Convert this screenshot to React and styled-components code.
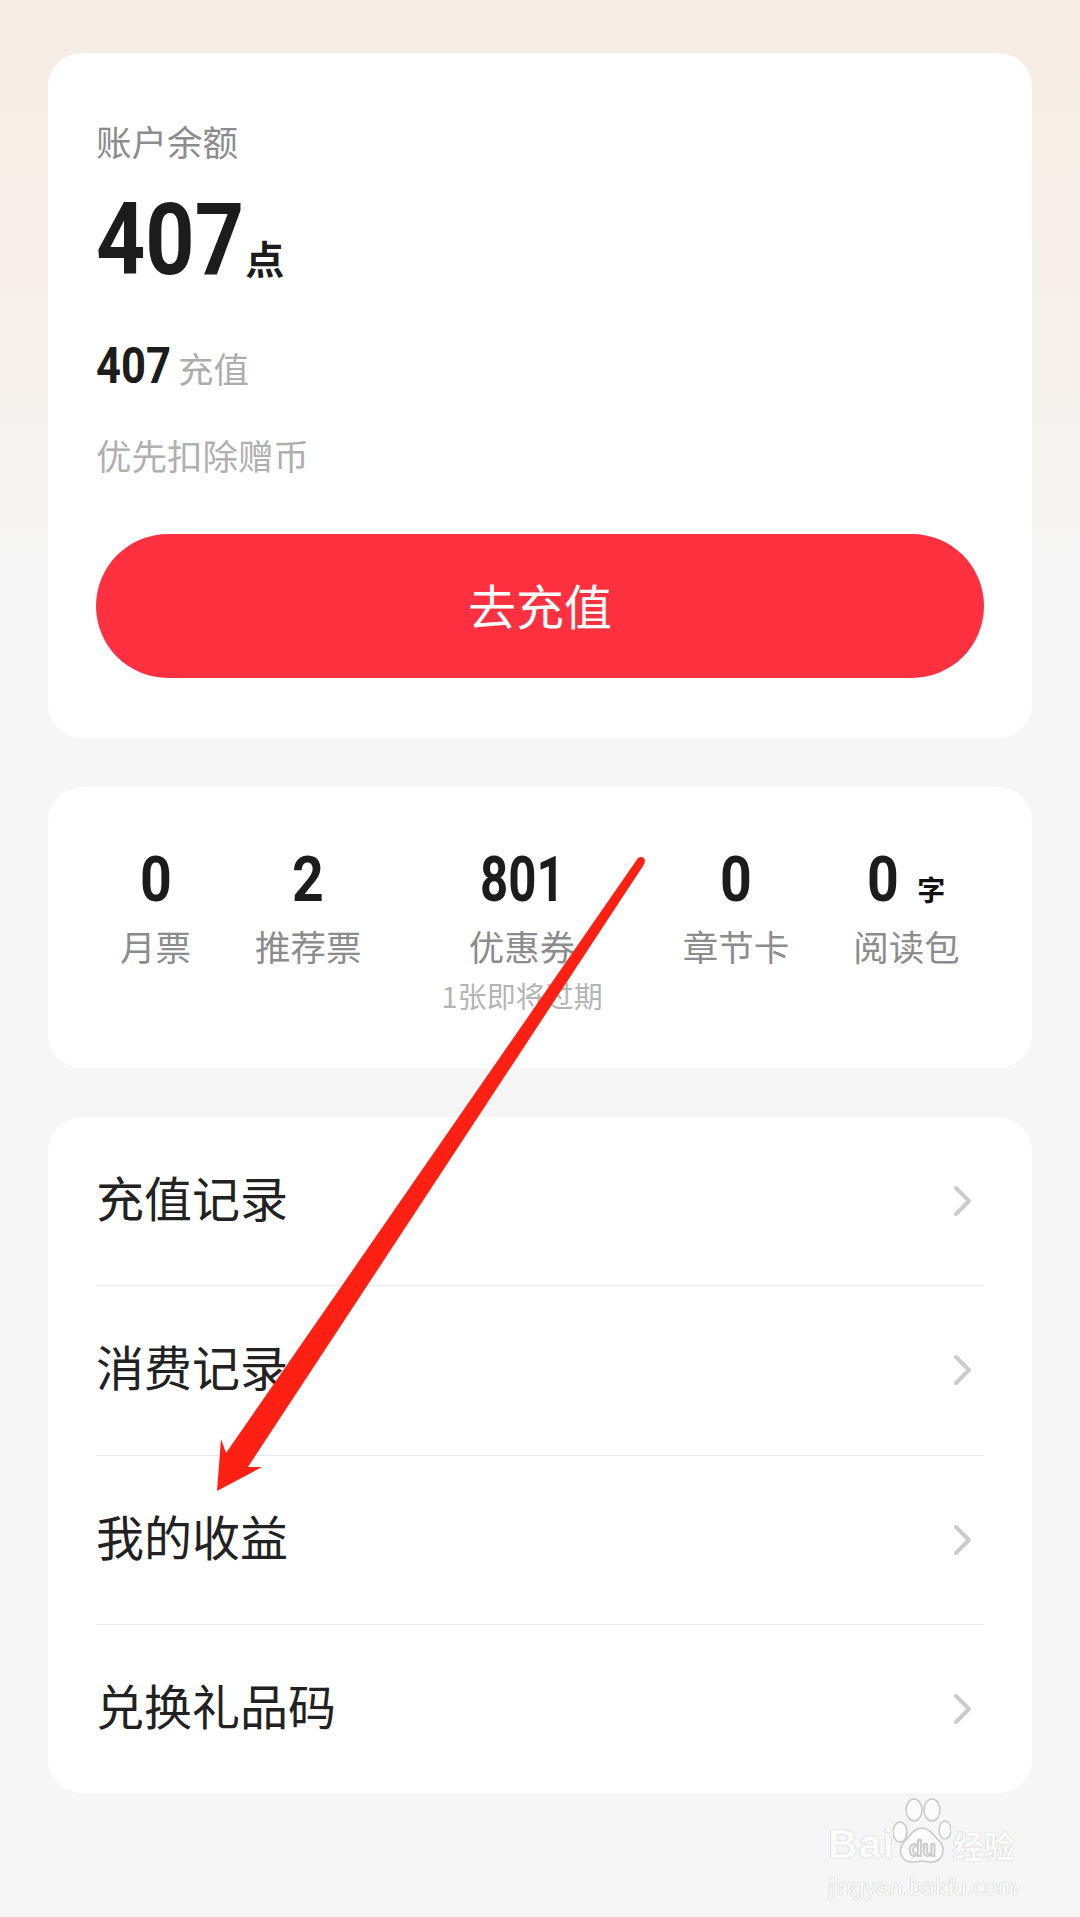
import React from 'react'
import styled, { createGlobalStyle } from 'styled-components'

const CJK = `"Noto Sans CJK SC", "Noto Sans", sans-serif`
const NUM = `Roboto, "Liberation Sans", "Noto Sans CJK SC", sans-serif`

const GlobalStyle = createGlobalStyle`
  html, body { margin: 0; padding: 0; }
  body { font-family: ${CJK}; background: #f6f6f6; }
`

const Page = styled.div`
  position: relative;
  width: 1080px;
  height: 1917px;
  box-sizing: border-box;
  padding: 53px 48px 0;
  display: flex;
  flex-direction: column;
  gap: 49px;
  overflow: hidden;
  background: linear-gradient(180deg, #f6ece3 0, #f7efe7 200px, #f6f2ee 400px, #f6f6f6 560px);
`

const Card = styled.section`
  background: #fff;
  border-radius: 34px;
`

const BalanceCard = styled(Card)`
  height: 685px;
  box-sizing: border-box;
  padding: 0 48px;
  display: flex;
  flex-direction: column;
`

const Caption = styled.div`
  font-size: 35.5px;
  line-height: 50px;
  color: ${p => p.$color};
  margin-top: ${p => p.$top}px;
`

// the reference numerals are a condensed DIN, so Roboto gets squeezed
// the negative margin gives back the width the transform takes away
const Digits = styled.span`
  display: inline-block;
  font-family: ${NUM};
  font-weight: 700;
  font-size: ${p => p.$size}px;
  line-height: ${p => p.$size}px;
  color: #1c1c1c;
  transform: scaleX(${p => p.$squeeze});
  transform-origin: left center;
  margin-right: ${p => -0.57 * p.$count * (1 - p.$squeeze)}em;
`

const Balance = styled.div`
  display: flex;
  align-items: baseline;
  height: 100px;
  margin-top: 24px;
`

const Unit = styled.span`
  font-family: ${CJK};
  font-weight: 700;
  font-size: 39px;
  line-height: 39px;
  margin-left: 1px;
  color: #1c1c1c;
`

const Split = styled.div`
  display: flex;
  align-items: baseline;
  gap: 7px;
  margin-top: 51px;
  height: 50px;
`

const SplitLabel = styled.span`
  font-size: 35.5px;
  line-height: 50px;
  color: #adadad;
`

const RechargeButton = styled.button`
  margin-top: 54px;
  height: 144px;
  padding: 0 0 5px;
  border: 0;
  border-radius: 72px;
  background: #ff3040;
  color: #fff;
  font-family: ${CJK};
  font-size: 48px;
`

const StatsCard = styled(Card)`
  height: 281px;
  box-sizing: border-box;
  padding: 61px 0 0 72px;
  display: flex;
  align-items: flex-start;
  gap: 64px;
`

const Stat = styled.div`
  display: flex;
  flex-direction: column;
  align-items: center;
  margin: ${p => (p.$wide ? '0 16px' : '0')};
`

const StatValue = styled.div`
  display: flex;
  align-items: baseline;
  gap: 18px;
  height: 62px;
`

const StatUnit = styled.span`
  font-family: ${CJK};
  font-weight: 700;
  font-size: 28px;
  line-height: 28px;
  color: #111;
`

const StatLabel = styled.div`
  margin-top: 11px;
  font-size: 35.5px;
  line-height: 50px;
  color: #8c8c8c;
`

const StatNote = styled.div`
  margin-top: 2px;
  font-size: 29px;
  line-height: 44px;
  color: #b5b5b5;
  white-space: nowrap;
`

const MenuCard = styled(Card)`
  height: 676px;
  box-sizing: border-box;
  padding: 0 48px;
  display: flex;
  flex-direction: column;
`

const MenuRow = styled.div`
  flex: 1;
  display: flex;
  align-items: center;
  justify-content: space-between;
  padding-right: 11px;
  border-top: ${p => (p.$first ? '0' : '1px solid #e9e9e9')};
`

const MenuLabel = styled.span`
  font-size: 48px;
  line-height: 60px;
  color: #222;
  margin-bottom: 10px;
`

const Pointer = styled.svg`
  position: absolute;
  left: 0;
  top: 0;
  pointer-events: none;
`

const Watermark = styled.div`
  position: absolute;
  left: 828px;
  top: 1796px;
  width: 196px;
  color: #fbfbfb;
  text-shadow: 0 0 1px #c4c4c4, 0 0 1px #c4c4c4;
`

const MarkTop = styled.div`
  display: flex;
  align-items: flex-end;
  height: 70px;
`

const MarkBrand = styled.span`
  font-family: "Liberation Sans", sans-serif;
  font-weight: 700;
  font-size: 41px;
  line-height: 44px;
  letter-spacing: 1px;
`

const MarkPaw = styled.svg`
  margin: 0 2px 0 -2px;
  flex: none;
`

const MarkPawText = styled.text`
  font-family: "Liberation Sans", sans-serif;
  font-size: 22px;
  font-weight: 700;
  fill: #fbfbfb;
  stroke: #c9c9c9;
  stroke-width: 0.8;
`

const MarkCn = styled.span`
  font-size: 31px;
  line-height: 42px;
  font-weight: 700;
  white-space: nowrap;
`

const MarkUrl = styled.div`
  font-family: "Liberation Sans", sans-serif;
  font-size: 23.5px;
  line-height: 30px;
  margin-top: 6px;
  white-space: nowrap;
`

const stats = [
  { value: '0', label: '月票' },
  { value: '2', label: '推荐票' },
  { value: '801', label: '优惠券', note: '1张即将过期' },
  { value: '0', label: '章节卡' },
  { value: '0', unit: '字', label: '阅读包' },
]

const menu = ['充值记录', '消费记录', '我的收益', '兑换礼品码']

const Chevron = () => (
  <svg width="20" height="32" viewBox="0 0 20 32" fill="none">
    <path d="M3 3l13 13L3 29" stroke="#cbcbcb" strokeWidth="4" strokeLinecap="round" strokeLinejoin="round" />
  </svg>
)

export default function App() {
  return (
    <Page>
      <GlobalStyle />
      <BalanceCard>
        <Caption $color="#8c8c8c" $top={63}>账户余额</Caption>
        <Balance>
          <Digits $size={100} $squeeze={0.86} $count={3}>407</Digits>
          <Unit>点</Unit>
        </Balance>
        <Split>
          <Digits $size={50} $squeeze={0.87} $count={3}>407</Digits>
          <SplitLabel>充值</SplitLabel>
        </Split>
        <Caption $color="#b0b0b0" $top={39}>优先扣除赠币</Caption>
        <RechargeButton>去充值</RechargeButton>
      </BalanceCard>

      <StatsCard>
        {stats.map(s => (
          <Stat key={s.label} $wide={!!s.note}>
            <StatValue>
              <Digits $size={63} $squeeze={s.value.length > 1 ? 0.78 : 0.88} $count={s.value.length}>{s.value}</Digits>
              {s.unit && <StatUnit>{s.unit}</StatUnit>}
            </StatValue>
            <StatLabel>{s.label}</StatLabel>
            {s.note && <StatNote>{s.note}</StatNote>}
          </Stat>
        ))}
      </StatsCard>

      <MenuCard>
        {menu.map((m, i) => (
          <MenuRow key={m} $first={i === 0}>
            <MenuLabel>{m}</MenuLabel>
            <Chevron />
          </MenuRow>
        ))}
      </MenuCard>

      <Pointer width="1080" height="1917" viewBox="0 0 1080 1917">
        <path
          d="M638 858 Q643 855 645 860 Q645 863 643 866 L248 1467 L262 1467 L217 1491 L221 1439 L226 1453 Z"
          fill="#ff2014"
        />
      </Pointer>

      <Watermark>
        <MarkTop>
          <MarkBrand>Bai</MarkBrand>
          <MarkPaw width="58" height="70" viewBox="0 0 58 70" fill="#fbfbfb" stroke="#c9c9c9" strokeWidth="1.5">
            <ellipse cx="7" cy="36" rx="7" ry="10" />
            <ellipse cx="21" cy="14" rx="8" ry="11" />
            <ellipse cx="39" cy="14" rx="8" ry="11" />
            <ellipse cx="52" cy="34" rx="6" ry="9" />
            <path d="M29 32c8 0 12 8 18 14 6 7 3 20-9 20-4 0-6-1-9-1s-6 1-10 1C8 66 4 54 11 46c6-6 10-14 18-14z" />
            <MarkPawText x="16" y="60">du</MarkPawText>
          </MarkPaw>
          <MarkCn>经验</MarkCn>
        </MarkTop>
        <MarkUrl>jingyan.baidu.com</MarkUrl>
      </Watermark>
    </Page>
  )
}
